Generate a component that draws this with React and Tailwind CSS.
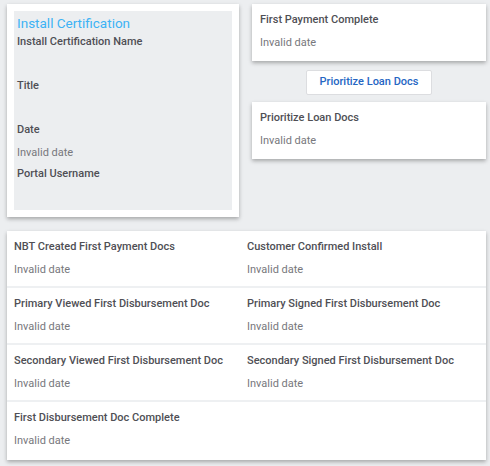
import React from "react";

const font = { fontFamily: "Roboto, 'Noto Sans', sans-serif" };

function Field({ label, value }) {
  return (
    <div className="pt-[6px] pb-[8px]">
      <div className="text-[11px] leading-[20px] font-medium text-[#4f4f55]">{label}</div>
      <div className="pt-[3px] text-[11px] leading-[20px] text-[#77777c]">{value}</div>
    </div>
  );
}

function CertField({ label, value }) {
  return (
    <div>
      <div className="text-[11px] leading-[20px] font-medium text-[#4f4f55]">{label}</div>
      <div className="h-[24px] pt-[3px] text-[11px] leading-[20px] text-[#77777c]">{value}</div>
    </div>
  );
}

const rows = [
  ["NBT Created First Payment Docs", "Customer Confirmed Install"],
  ["Primary Viewed First Disbursement Doc", "Primary Signed First Disbursement Doc"],
  ["Secondary Viewed First Disbursement Doc", "Secondary Signed First Disbursement Doc"],
  ["First Disbursement Doc Complete", null],
];

export default function App() {
  return (
    <div className="w-[490px] h-[466px] bg-[#eceef0] pl-[7px] pr-[4px] pt-[4px]" style={font}>
      <div className="flex gap-[13px]">
        <div className="w-[232px] h-[213px] bg-white p-[7px] shadow-[0_2px_4px_rgba(0,0,0,0.3)]">
          <div className="h-full bg-[#eceef0] px-[3px] pt-[4px]">
            <div className="text-[13.5px] leading-[17px] text-[#3db3f5]">Install Certification</div>
            <CertField label="Install Certification Name" value="" />
            <CertField label="Title" value="" />
            <CertField label="Date" value="Invalid date" />
            <CertField label="Portal Username" value="" />
          </div>
        </div>
        <div className="w-[234px] flex flex-col">
          <div className="bg-white px-[8px] shadow-[0_2px_4px_rgba(0,0,0,0.3)]">
            <Field label="First Payment Complete" value="Invalid date" />
          </div>
          <div className="flex justify-center mt-[9px]">
            <button className="w-[126px] h-[25px] bg-white border border-[#dcdde0] rounded-[2px] text-[11px] font-medium text-[#2566c3]">
              Prioritize Loan Docs
            </button>
          </div>
          <div className="mt-[7px] bg-white px-[8px] shadow-[0_2px_4px_rgba(0,0,0,0.3)]">
            <Field label="Prioritize Loan Docs" value="Invalid date" />
          </div>
        </div>
      </div>
      <div className="mt-[14px] w-[479px] bg-white shadow-[0_2px_4px_rgba(0,0,0,0.3)]">
        {rows.map((r, i) => {
          const last = i === rows.length - 1;
          return (
            <div
              key={i}
              className={
                "grid grid-cols-[233px_1fr] pl-[7px] " +
                (last ? "h-[58px]" : "h-[57px] border-b-2 border-[#eef0f2]")
              }
            >
              <div>
                <Field label={r[0]} value="Invalid date" />
              </div>
              <div>{r[1] && <Field label={r[1]} value="Invalid date" />}</div>
            </div>
          );
        })}
      </div>
    </div>
  );
}
